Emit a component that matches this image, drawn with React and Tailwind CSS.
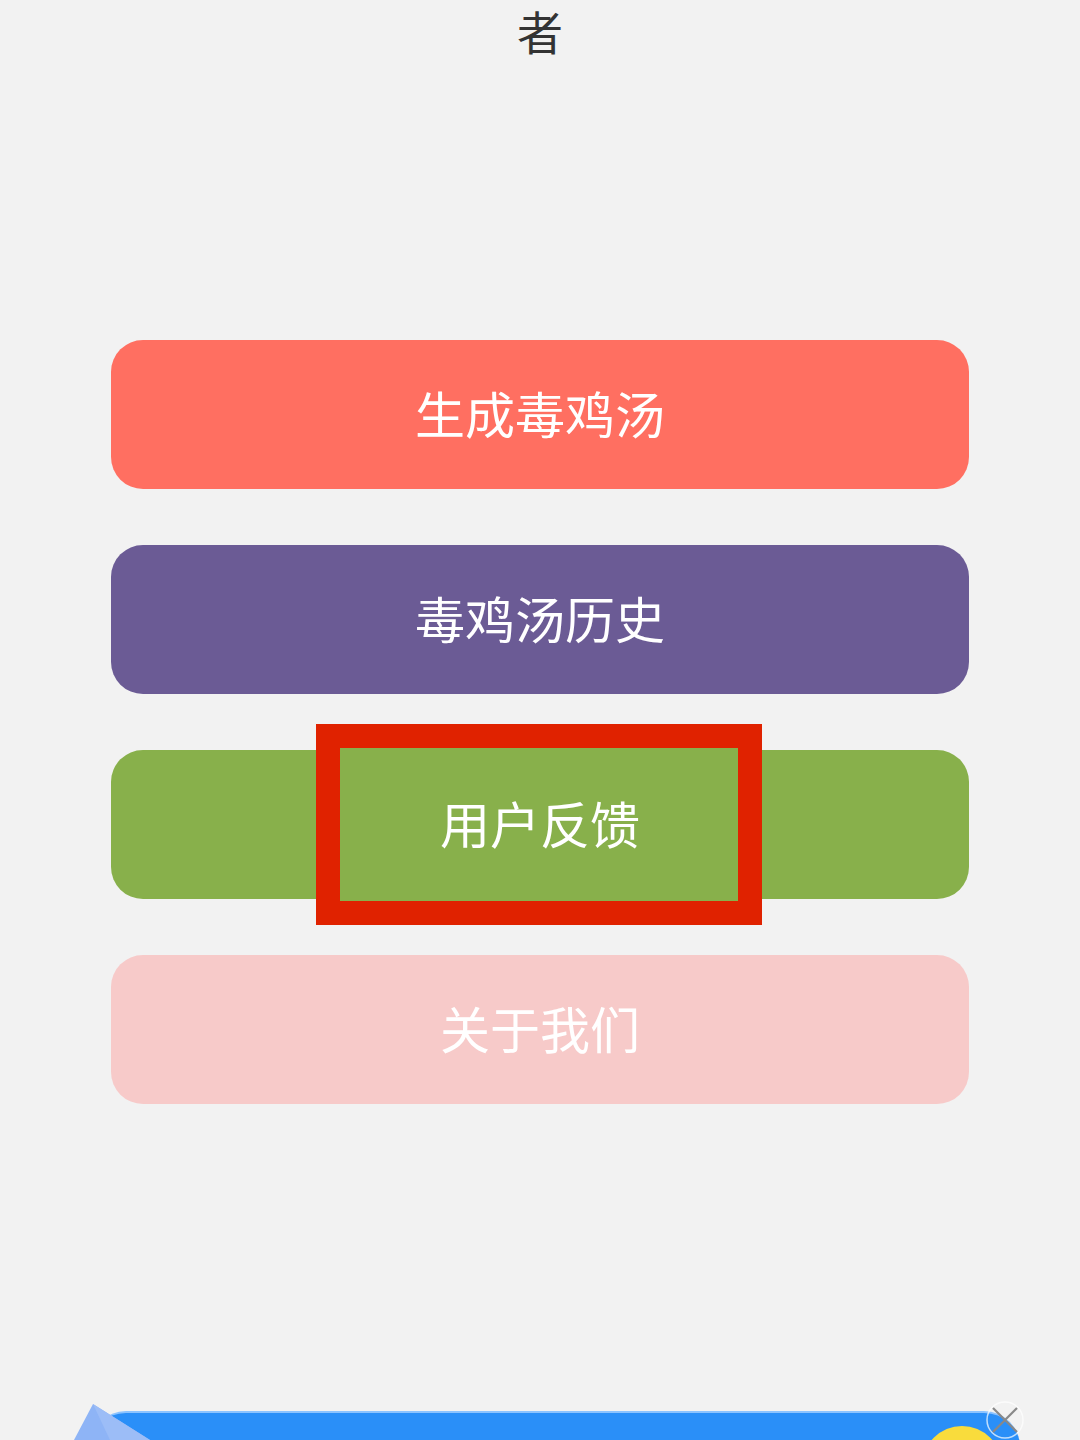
export default function App() {
  const cjk = { fontFamily: '"Noto Sans CJK SC", "Noto Sans", sans-serif' };
  return (
    <div className="relative w-[1080px] h-[1440px] overflow-hidden bg-[#f2f2f2]" style={cjk}>
      <div className="flex justify-center text-[46px] leading-[60px] text-[#333333]">者</div>
      <div className="flex flex-col gap-[56px] px-[111px] pt-[280px]">
        <div className="h-[149px] rounded-[32px] bg-[#ff6f61] flex items-center justify-center text-white text-[50px] pb-[4px]">生成毒鸡汤</div>
        <div className="h-[149px] rounded-[32px] bg-[#6b5b95] flex items-center justify-center text-white text-[50px] pb-[4px]">毒鸡汤历史</div>
        <div className="relative h-[149px] rounded-[32px] bg-[#88b04b] flex items-center justify-center text-white text-[50px] pb-[4px]">
          <span className="relative z-10">用户反馈</span>
          <div className="absolute left-[205px] top-[-26px] w-[446px] h-[201px] border-[24px] border-[#e02200] bg-[#88b04b]"></div>
        </div>
        <div className="h-[149px] rounded-[32px] bg-[#f7cac9] flex items-center justify-center text-white text-[50px] pb-[4px]">关于我们</div>
      </div>
      {/* bottom banner */}
      <div className="absolute left-[90px] top-[1411px] w-[930px] h-[120px] rounded-[36px] bg-[#2a8ff8] border-t-2 border-[#8cc3ff]"></div>
      <div className="absolute left-[922px] top-[1426px] w-[80px] h-[80px] rounded-full bg-[#f9dc3c]"></div>
      <svg className="absolute left-[70px] top-[1400px]" width="90" height="40" viewBox="0 0 90 40">
        <polygon points="23,4 4,40 80,40" fill="#8eb4f6" />
        <polygon points="23,4 40,40 80,40" fill="#9cbdf7" />
      </svg>
      <svg className="absolute left-[984px] top-[1400px]" width="42" height="40" viewBox="0 0 42 40">
        <circle cx="21" cy="20" r="18" fill="none" stroke="#ffffff" strokeOpacity="0.7" strokeWidth="1.5" />
        <path d="M9 8 L33 32 M33 8 L9 32" stroke="#888888" strokeWidth="2.2" />
      </svg>
    </div>
  );
}
